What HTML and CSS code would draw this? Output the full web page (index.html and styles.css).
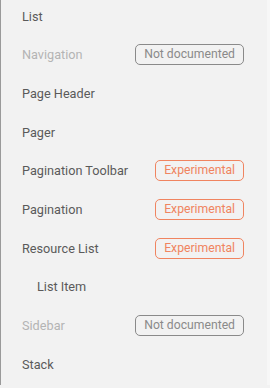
FILE: index.html
```html
<!DOCTYPE html>
<html lang="en">
<head>
    <meta charset="UTF-8">
    <title>Components</title>
    <link rel="stylesheet" href="styles.css">
</head>
<body>
    <nav class="sidenav">
        <ul class="nav-list">
            <li class="nav-item"><span>List</span></li>
            <li class="nav-item disabled"><span>Navigation</span><span class="badge muted">Not documented</span></li>
            <li class="nav-item"><span>Page Header</span></li>
            <li class="nav-item"><span>Pager</span></li>
            <li class="nav-item"><span>Pagination Toolbar</span><span class="badge experimental">Experimental</span></li>
            <li class="nav-item"><span>Pagination</span><span class="badge experimental">Experimental</span></li>
            <li class="nav-item"><span>Resource List</span><span class="badge experimental">Experimental</span></li>
            <li class="nav-item sub"><span>List Item</span></li>
            <li class="nav-item disabled"><span>Sidebar</span><span class="badge muted">Not documented</span></li>
            <li class="nav-item"><span>Stack</span></li>
        </ul>
    </nav>
</body>
</html>
```

FILE: styles.css
```css
:root {
    --bg-color: #f2f2f2;
    --text-color: #5a5a5a;
    --muted-color: #b4b4b4;
    --badge-gray: #8a8a8a;
    --badge-orange: #f08460;
}

* {
    box-sizing: border-box;
}

body {
    margin: 0;
    height: 388px;
    overflow: hidden;
    background-color: var(--bg-color);
    font-family: 'Roboto', sans-serif;
    color: var(--text-color);
}

.sidenav {
    height: 388px;
    border-left: 1px solid #9a9a9a;
    border-right: 3px solid #f7f7f7;
}

.nav-list {
    list-style: none;
    margin: -3px 0 0;
    padding: 0 23px 0 21px;
}

.nav-item {
    display: flex;
    align-items: center;
    justify-content: space-between;
    height: 38.67px;
    font-size: 12.7px;
}

.nav-item.sub {
    padding-left: 15px;
}

.nav-item.disabled {
    color: var(--muted-color);
}

.badge {
    display: inline-block;
    height: 21px;
    line-height: 19px;
    padding: 0 8px;
    border: 1px solid;
    border-radius: 5px;
    font-size: 12.2px;
}

.badge.muted {
    color: var(--badge-gray);
    border-color: var(--badge-gray);
}

.badge.experimental {
    color: var(--badge-orange);
    border-color: var(--badge-orange);
}
```
